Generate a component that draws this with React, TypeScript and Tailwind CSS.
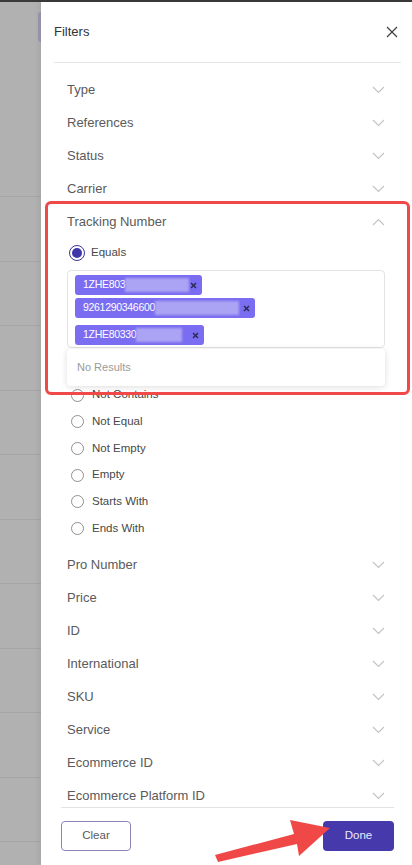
import React from "react";

const font = { fontFamily: '"Liberation Sans", Arial, sans-serif' };

function Chevron({ up = false }: { up?: boolean }) {
  return (
    <svg width="13" height="8" viewBox="0 0 13 8" fill="none">
      <polyline
        points={up ? "1,7 6.5,1.5 12,7" : "1,1 6.5,6.5 12,1"}
        stroke="#c2c2c2"
        strokeWidth="1.1"
      />
    </svg>
  );
}

function Row({ label, up = false }: { label: string; up?: boolean }) {
  return (
    <div className="flex h-[33px] shrink-0 items-center justify-between">
      <span className="text-[13px] text-[#5a5a5a] whitespace-nowrap">{label}</span>
      <Chevron up={up} />
    </div>
  );
}

function Radio({ label }: { label: string }) {
  return (
    <div className="flex h-[26.7px] shrink-0 items-center pl-[4px]">
      <span className="h-[13px] w-[13px] rounded-full border border-[#909090] bg-white" />
      {label ? <span className="ml-[8px] text-[11.5px] text-[#474747]">{label}</span> : null}
    </div>
  );
}

function ChipX() {
  return (
    <svg width="7" height="7" viewBox="0 0 7 7" className="shrink-0">
      <line x1="1" y1="1" x2="6" y2="6" stroke="#2b2850" strokeWidth="1.4" />
      <line x1="6" y1="1" x2="1" y2="6" stroke="#2b2850" strokeWidth="1.4" />
    </svg>
  );
}

function Chip({ text, w, blurW, mt }: { text: string; w: string; blurW: string; mt: string }) {
  return (
    <div className={`flex h-[20px] items-center rounded-[3px] bg-[#7b6df1] pl-[8px] pr-[5px] ${w} ${mt}`}>
      <span className="text-[10.5px] text-white tracking-[-0.3px] whitespace-nowrap">{text}</span>
      <span className={`h-[14px] bg-[#aba3f3] blur-[0.8px] ${blurW}`} />
      <span className="flex-1" />
      <ChipX />
    </div>
  );
}

export default function App() {
  const mainRows = ["Pro Number", "Price", "ID", "International", "SKU", "Service", "Ecommerce ID", "Ecommerce Platform ID"];
  return (
    <div className="relative flex h-[865px] w-[412px] flex-col overflow-hidden bg-white" style={font}>
      <div className="h-[2px] shrink-0 bg-[#3a3a3a]" />
      <div className="flex min-h-0 flex-1">
        {/* dimmed background */}
        <div className="flex w-[41px] shrink-0 flex-col bg-[#b1b1b1]">
          <div className="h-[194px] shrink-0" />
          {Array.from({ length: 11 }).map((_, i) => (
            <div key={i} className="h-[64.5px] shrink-0 border-t border-[#a6a6a6]" />
          ))}
        </div>
        {/* panel */}
        <div className="relative z-10 flex min-w-0 flex-1 flex-col bg-white shadow-[-3px_0_4px_rgba(0,0,0,0.05)]">
          <div className="flex h-[60px] shrink-0 items-center justify-between pl-[13px] pr-[14px]">
            <span className="text-[13px] text-[#333]">Filters</span>
            <svg width="12" height="12" viewBox="0 0 12 12">
              <line x1="1" y1="1" x2="11" y2="11" stroke="#444" strokeWidth="1.3" />
              <line x1="11" y1="1" x2="1" y2="11" stroke="#444" strokeWidth="1.3" />
            </svg>
          </div>
          <div className="ml-[13px] mr-[11px] h-px shrink-0 bg-[#e6e6e6]" />
          <div className="relative flex min-h-0 flex-1 flex-col overflow-hidden pl-[26px] pr-[27px] pt-[10px]">
            <Row label="Type" />
            <Row label="References" />
            <Row label="Status" />
            <Row label="Carrier" />
            <Row label="Tracking Number" up />
            <div className="mt-[1px] flex h-[28px] shrink-0 items-center pl-[2px]">
              <span className="flex h-[16px] w-[16px] items-center justify-center rounded-full border-[1.5px] border-[#3b3399] bg-white">
                <span className="h-[10px] w-[10px] rounded-full bg-[#3f37a9]" />
              </span>
              <span className="ml-[6px] text-[11.5px] text-[#474747]">Equals</span>
            </div>
            <div className="relative mt-[3px] shrink-0">
              <div className="flex h-[78px] flex-col items-start rounded-[4px] border border-[#e3e3e3] pl-[7px] pt-[4px]">
                <Chip text="1ZHE803" w="w-[127px]" blurW="w-[64px]" mt="" />
                <Chip text="9261290346600" w="w-[180px]" blurW="w-[84px]" mt="mt-[3px]" />
                <Chip text="1ZHE80330" w="w-[129px]" blurW="w-[46px]" mt="mt-[7px]" />
              </div>
              <div className="absolute left-0 right-0 top-[79px] z-10 flex h-[37px] items-center rounded-[4px] bg-white pl-[10px] shadow-[0_1px_6px_rgba(0,0,0,0.14)]">
                <span className="text-[11px] text-[#9b9b9b]">No Results</span>
              </div>
            </div>
            <div className="mt-[7px] flex shrink-0 flex-col">
              <Radio label="" />
              <Radio label="Not Contains" />
              <Radio label="Not Equal" />
              <Radio label="Not Empty" />
              <Radio label="Empty" />
              <Radio label="Starts With" />
              <Radio label="Ends With" />
            </div>
            <div className="mt-[6.5px] flex shrink-0 flex-col">
              {mainRows.map((r) => (
                <Row key={r} label={r} />
              ))}
            </div>
          </div>
          <div className="ml-[20px] mr-[18px] h-px shrink-0 bg-[#e3e3e3]" />
          <div className="flex shrink-0 items-center justify-between pb-[14px] pl-[20px] pr-[18px] pt-[13px]">
            <button className="flex h-[30px] w-[70px] items-center justify-center rounded-[4px] border border-[#8d85b5] bg-white text-[11.5px] text-[#5a5a5a]">
              Clear
            </button>
            <button className="flex h-[30px] w-[71px] items-center justify-center rounded-[4px] bg-[#4539ab] text-[11.5px] text-[#ecebff]">
              Done
            </button>
          </div>
        </div>
      </div>

      {/* partially hidden element behind overlay */}
      <div className="absolute left-[38px] top-[12px] z-0 h-[30px] w-[3px] rounded-l-[3px] bg-[#9a98b1]" />

      {/* annotation: red box */}
      <div className="pointer-events-none absolute left-[45px] top-[201px] z-20 h-[194px] w-[365px] rounded-[6px] border-[3px] border-[#f04949]" />

      {/* annotation: red arrow */}
      <svg className="pointer-events-none absolute left-0 top-0 z-20" width="412" height="865" viewBox="0 0 412 865">
        <polygon
          points="215,855 294,834 290,820 330,828 299,856 297,844 218,862"
          fill="#f04747"
        />
      </svg>
    </div>
  );
}
